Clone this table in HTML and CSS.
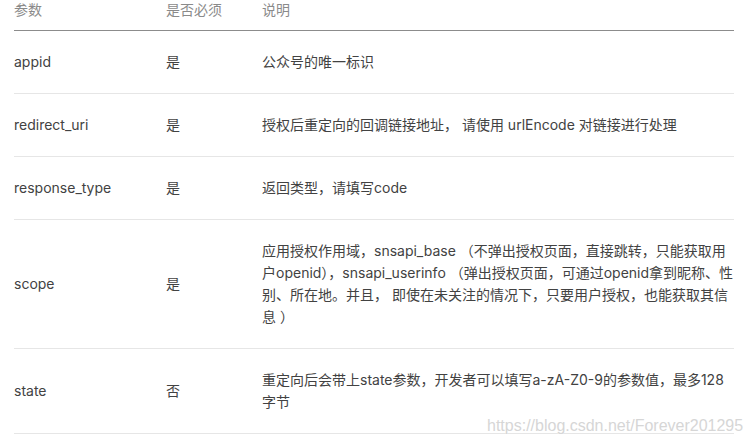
FILE: index.html
```html
<!DOCTYPE html>
<html lang="zh-CN">
<head>
  <meta charset="UTF-8" />
  <meta name="viewport" content="width=device-width, initial-scale=1.0"/>
  <title>网页授权参数</title>
  <link rel="stylesheet" href="styles.css">
</head>
<body>
  <div class="doc">
    <table class="params">
      <thead>
        <tr>
          <th class="col-name">参数</th>
          <th class="col-req">是否必须</th>
          <th class="col-desc">说明</th>
        </tr>
      </thead>
      <tbody>
        <tr>
          <td>appid</td>
          <td>是</td>
          <td>公众号的唯一标识</td>
        </tr>
        <tr>
          <td>redirect_uri</td>
          <td>是</td>
          <td>授权后重定向的回调链接地址， 请使用 urlEncode 对链接进行处理</td>
        </tr>
        <tr>
          <td>response_type</td>
          <td>是</td>
          <td>返回类型，请填写code</td>
        </tr>
        <tr>
          <td>scope</td>
          <td>是</td>
          <td>应用授权作用域，snsapi_base （不弹出授权页面，直接跳转，只能获取用户openid），snsapi_userinfo （弹出授权页面，可通过openid拿到昵称、性别、所在地。并且， 即使在未关注的情况下，只要用户授权，也能获取其信息 ）</td>
        </tr>
        <tr>
          <td>state</td>
          <td>否</td>
          <td>重定向后会带上state参数，开发者可以填写a-zA-Z0-9的参数值，最多128字节</td>
        </tr>
      </tbody>
    </table>
    <div class="watermark">https://blog.csdn.net/Forever201295</div>
  </div>
</body>
</html>
```

FILE: styles.css
```css
body {
  margin: 0;
  background-color: #fff;
  font-family: Inter, "Noto Sans CJK SC", sans-serif;
  font-size: 14px;
  color: #424242;
}
.doc {
  position: relative;
  width: 749px;
  height: 446px;
  overflow: hidden;
}
.params {
  margin-left: 14px;
  width: 720px;
  border-collapse: collapse;
  table-layout: fixed;
}
.params th {
  text-align: left;
  font-weight: normal;
  color: #8a8a8a;
  line-height: 20px;
  padding: 0 0 10px;
  border-bottom: 1px solid #8c8c8c;
}
.params td {
  line-height: 22px;
  padding: 20px 0;
  border-bottom: 1px solid #e6e6e6;
  vertical-align: middle;
}
.col-name {
  width: 152px;
}
.col-req {
  width: 96px;
}
.col-desc {
  width: 472px;
}
.watermark {
  position: absolute;
  left: 487px;
  top: 417px;
  font-family: "Liberation Sans", Arial, sans-serif;
  font-size: 16px;
  color: #d6d6d6;
  text-shadow: 0 0 1px #fff;
  white-space: nowrap;
}
```
